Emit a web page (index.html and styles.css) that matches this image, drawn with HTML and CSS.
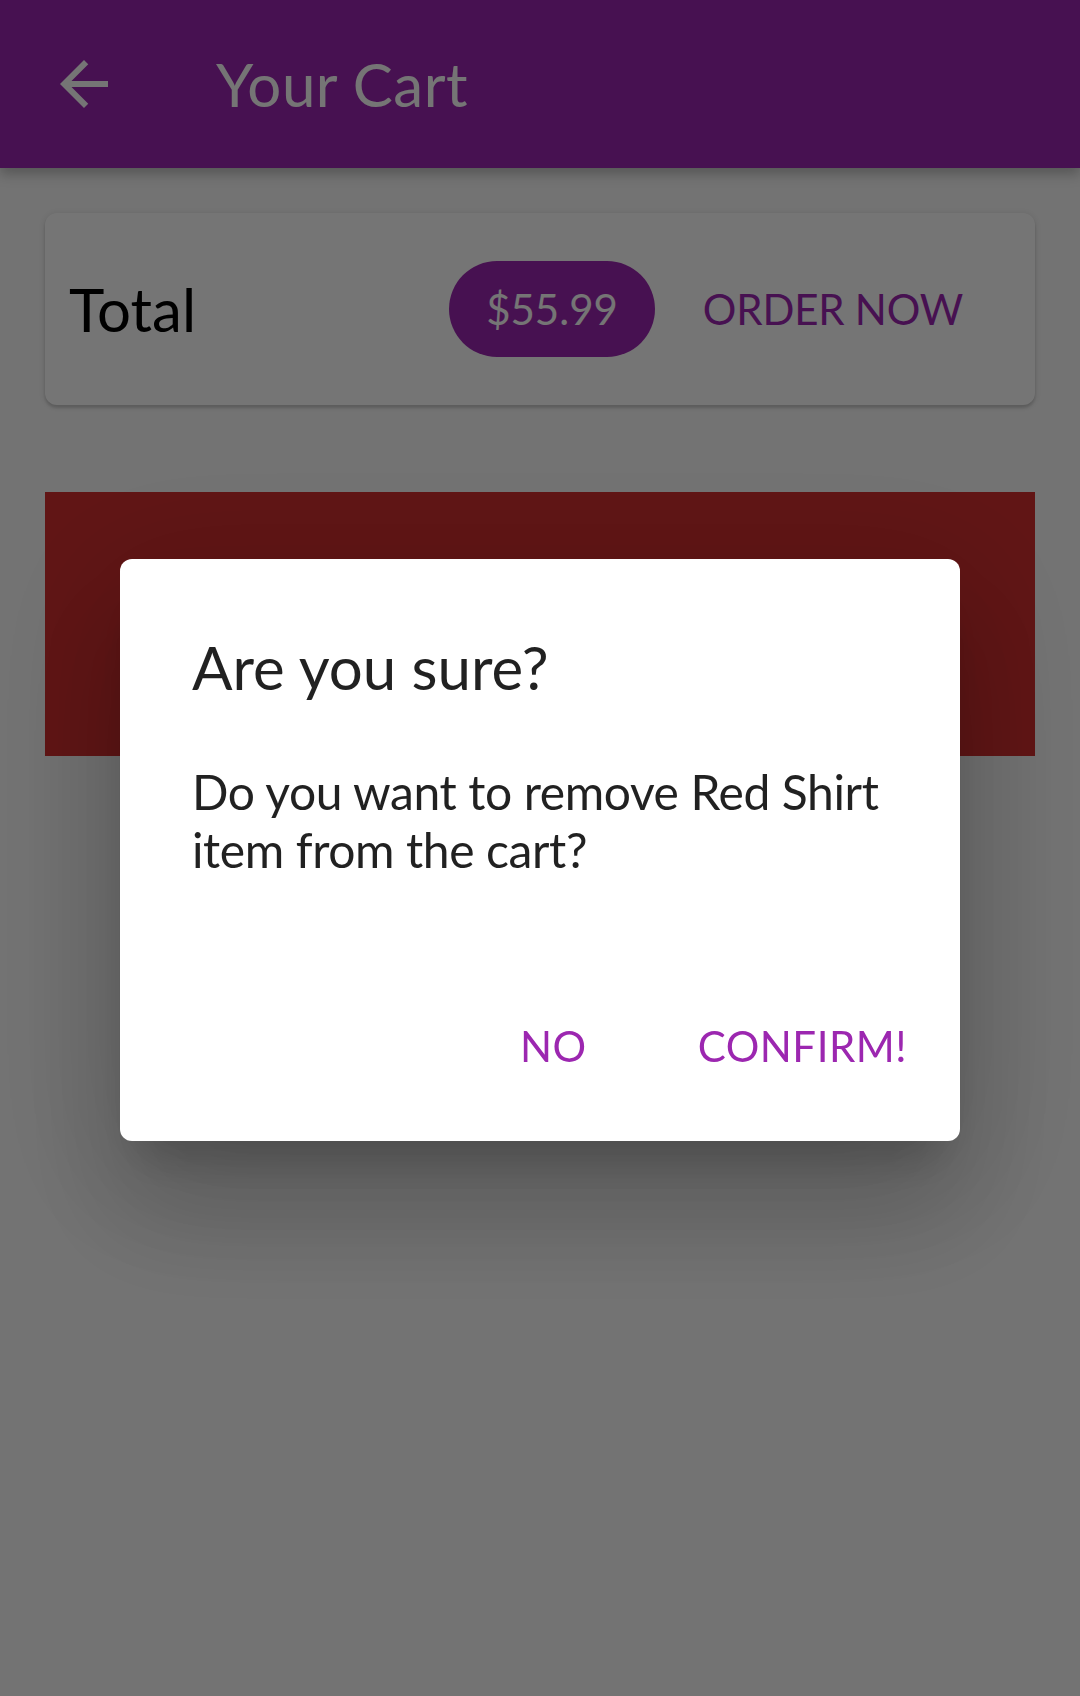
FILE: index.html
```html
<!DOCTYPE html>
<html lang="en">
<head>
<meta charset="utf-8">
<title>Your Cart</title>
<link rel="stylesheet" href="styles.css">
</head>
<body>
<div class="app">
  <header class="appbar">
    <button class="back" aria-label="Back">
      <svg viewBox="0 0 24 24" width="72" height="72"><path fill="#ffffff" d="M20 11H7.83l5.59-5.59L12 4l-8 8 8 8 1.41-1.41L7.83 13H20v-2z"/></svg>
    </button>
    <h1 class="title">Your Cart</h1>
  </header>
  <main class="content">
    <section class="total-card">
      <span class="total-label">Total</span>
      <span class="spacer"></span>
      <span class="chip">$55.99</span>
      <button class="order-btn">ORDER NOW</button>
    </section>
    <div class="dismiss-bg"></div>
  </main>
</div>
<div class="scrim">
  <div class="dialog" role="dialog">
    <h2 class="dialog-title">Are you sure?</h2>
    <p class="dialog-text">Do you want to remove Red Shirt item from the cart?</p>
    <div class="dialog-actions">
      <button class="text-btn">NO</button>
      <button class="text-btn">CONFIRM!</button>
    </div>
  </div>
</div>
</body>
</html>
```
FILE: styles.css
```css
* { box-sizing: border-box; }
html, body {
  margin: 0;
  padding: 0;
}
body {
  width: 1080px;
  height: 1696px;
  background: #fafafa;
  font-family: Lato, "Open Sans", "Liberation Sans", sans-serif;
  overflow: hidden;
}
button {
  font-family: inherit;
  border: 0;
  background: none;
  padding: 0;
  margin: 0;
  cursor: pointer;
}
.appbar {
  height: 168px;
  background: #9c27b0;
  display: flex;
  align-items: center;
  box-shadow: 0 6px 12px rgba(0,0,0,0.25);
  position: relative;
  z-index: 1;
}
.back {
  width: 72px;
  height: 72px;
  margin-left: 48px;
  display: block;
}
.back svg { display: block; }
.title {
  margin: 0 0 0 96px;
  font-size: 60px;
  font-weight: 400;
  color: #ffffff;
  line-height: 72px;
  letter-spacing: 0.5px;
}
.content {
  padding: 45px;
}
.total-card {
  background: #ffffff;
  border-radius: 12px;
  box-shadow: 0 3px 3px rgba(0,0,0,0.14), 0 1px 6px rgba(0,0,0,0.12);
  padding: 48px 24px;
  display: flex;
  align-items: center;
}
.total-label {
  font-size: 60px;
  color: #000000;
  line-height: 72px;
}
.spacer { flex: 1; }
.chip {
  height: 96px;
  line-height: 96px;
  padding: 0 37px;
  border-radius: 48px;
  background: #9c27b0;
  color: #ffffff;
  font-size: 42px;
}
.order-btn {
  padding: 0 48px;
  height: 96px;
  line-height: 96px;
  font-size: 42px;
  color: #9c27b0;
  letter-spacing: -0.2px;
}
.dismiss-bg {
  margin-top: 87px;
  height: 264px;
  background: #d32f2f;
}
.scrim {
  position: fixed;
  inset: 0;
  background: rgba(0,0,0,0.54);
  display: flex;
  align-items: center;
  justify-content: center;
  z-index: 10;
}
.dialog {
  width: 840px;
  background: #ffffff;
  border-radius: 12px;
  box-shadow: 0 72px 114px 9px rgba(0,0,0,0.14), 0 27px 138px 24px rgba(0,0,0,0.12), 0 33px 45px -21px rgba(0,0,0,0.2);
  transform: translateY(2px);
}
.dialog-title {
  margin: 0;
  padding: 72px 72px 0;
  font-size: 60px;
  line-height: 72px;
  font-weight: 400;
  color: rgba(0,0,0,0.87);
}
.dialog-text {
  margin: 0;
  padding: 60px 72px 72px;
  font-size: 48px;
  line-height: 57.6px;
  letter-spacing: -0.4px;
  color: rgba(0,0,0,0.87);
}
.dialog-actions {
  height: 190px;
  display: flex;
  align-items: center;
  justify-content: flex-end;
  gap: 111px;
  padding-right: 53px;
}
.text-btn {
  font-size: 42px;
  line-height: 108px;
  color: #9c27b0;
  letter-spacing: 0.5px;
}
```
